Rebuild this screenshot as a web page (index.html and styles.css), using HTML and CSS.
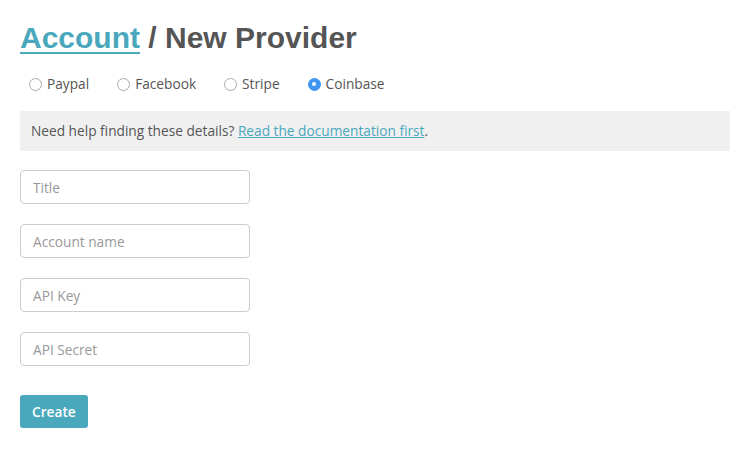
FILE: index.html
```html
<!DOCTYPE html>
<html>
<head>
<meta charset="utf-8">
<link rel="stylesheet" href="styles.css">
</head>
<body>
<div class="page">
  <h1 class="title"><a href="#" class="title-link">Account</a> / New Provider</h1>
  <div class="radios">
    <label class="radio"><input type="radio" name="p" class="radio-input"><span>Paypal</span></label>
    <label class="radio"><input type="radio" name="p" class="radio-input"><span>Facebook</span></label>
    <label class="radio"><input type="radio" name="p" class="radio-input"><span>Stripe</span></label>
    <label class="radio"><input type="radio" name="p" class="radio-input" checked><span>Coinbase</span></label>
  </div>
  <div class="help">Need help finding these details? <a href="#" class="help-link">Read the documentation first</a>.</div>
  <form class="form">
    <input class="field" type="text" placeholder="Title">
    <input class="field" type="text" placeholder="Account name">
    <input class="field" type="text" placeholder="API Key">
    <input class="field" type="text" placeholder="API Secret">
    <button type="button" class="btn">Create</button>
  </form>
</div>
</body>
</html>
```
FILE: styles.css
```css
html, body { margin: 0; padding: 0; background: #fff; }
body { font-family: "Open Sans", sans-serif; font-size: 13.7px; color: #555; }
.page { padding: 20px 20px 20px 20px; width: 710px; }
.title {
  font-family: "Liberation Sans", Arial, sans-serif;
  font-weight: bold;
  font-size: 30px;
  line-height: 36px;
  color: #555;
  margin: 0;
}
.title-link { color: #4aa8bc; text-decoration: underline; text-underline-offset: 4px; text-decoration-thickness: 2px; }
.radios { display: flex; align-items: center; gap: 28px; padding-left: 9px; margin-top: 18px; height: 20px; }
.radio { display: flex; align-items: center; gap: 5px; line-height: 20px; }
.radio-input {
  appearance: none; -webkit-appearance: none;
  width: 13px; height: 13px; margin: 0;
  border: 1px solid #a9a9a9; border-radius: 50%;
  background: #fff; box-sizing: border-box;
  position: relative;
}
.radio-input:checked { background: #3e95f2; border-color: #3e95f2; }
.radio-input:checked::after {
  content: ""; position: absolute; left: 50%; top: 50%;
  width: 4px; height: 4px; margin: -2px 0 0 -2px;
  border-radius: 50%; background: #fff;
}
.help {
  margin-top: 17px;
  background: #f0f0f0;
  padding: 10px 11px;
  line-height: 20px;
  color: #555;
}
.help-link { color: #4aa8bc; text-decoration: underline; }
.form { display: flex; flex-direction: column; align-items: flex-start; margin-top: 19px; }
.field {
  width: 230px; height: 34px; box-sizing: border-box;
  border: 1px solid #ccc; border-radius: 4px;
  padding: 0 12px; margin: 0 0 20px 0;
  font-family: "Open Sans", sans-serif; font-size: 13.7px; color: #555;
  outline: none;
}
.field::placeholder { color: #999; }
.btn {
  margin-top: 9px;
  height: 33px; padding: 0 12px;
  background: #4aa8bc; color: #fff; border: none; border-radius: 3px;
  font-family: "Open Sans", sans-serif; font-size: 13.7px; font-weight: 600;
}
```
